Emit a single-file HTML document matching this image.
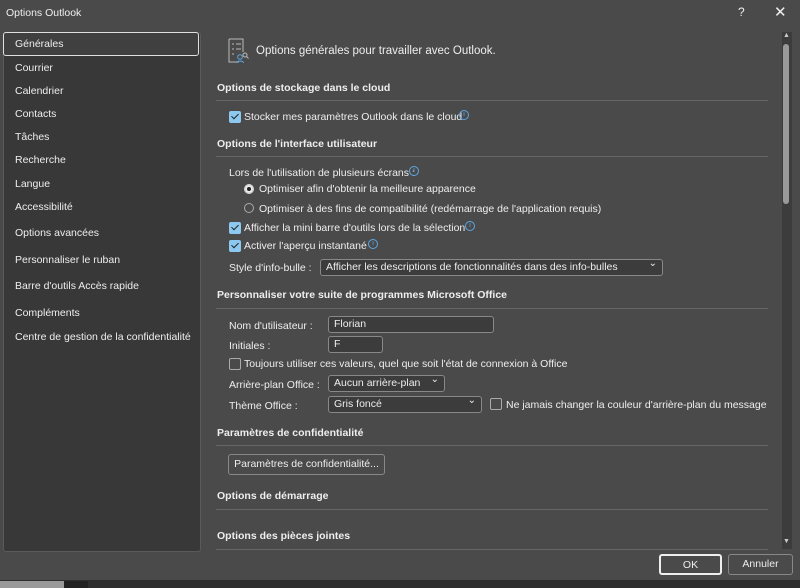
<!DOCTYPE html><html><head><style>
body{margin:0;width:800px;height:588px;background:#4a4a4a;font-family:"Liberation Sans",sans-serif;font-size:10.5px;color:#eee;position:relative;overflow:hidden}
.a{position:absolute;white-space:nowrap}
.side{position:absolute;left:3px;top:32px;width:196px;height:518px;background:#383838;border:1px solid #5a5a5a;border-radius:3px}
.sel{position:absolute;left:3px;top:32px;width:194px;height:22px;border:1.5px solid #e0e0e0;border-radius:3px;background:#404040}
.h{font-weight:bold;font-size:10.5px}
.ln{position:absolute;left:216px;width:552px;height:1px;background:#666}
.cb{position:absolute;width:10px;height:10px;border-radius:2px;border:1px solid #aaa}
.cb.on{background:#8cc8f0;border-color:#8cc8f0}
.cb.on::after{content:"";position:absolute;left:3px;top:0px;width:3px;height:6px;border:solid #222;border-width:0 1.5px 1.5px 0;transform:rotate(45deg)}
.i{position:absolute;width:8px;height:8px;border:1px solid #5aa7e6;border-radius:50%;color:#5aa7e6;font-size:7px;line-height:8px;text-align:center}
.box{position:absolute;border:1px solid #888;border-radius:3px;background:#3c3c3c;height:15px;line-height:15px;padding-left:5px;box-sizing:border-box;height:17px}
.dd::after{content:"⌄";position:absolute;right:5px;top:-4px;font-size:10px}
.btn{position:absolute;border:1px solid #888;border-radius:3px;text-align:center;box-sizing:border-box}
</style></head><body>
<div class="a" style="left:6px;top:7px">Options Outlook</div>
<div class="a" style="left:738px;top:5px;font-size:12px">?</div>
<div class="a" style="left:774px;top:3px;font-size:15px">✕</div>
<div class="side"></div><div class="sel"></div>
<div class="a" style="left:15px;top:38px">Générales</div>
<div class="a" style="left:15px;top:62px">Courrier</div>
<div class="a" style="left:15px;top:85px">Calendrier</div>
<div class="a" style="left:15px;top:108px">Contacts</div>
<div class="a" style="left:15px;top:131px">Tâches</div>
<div class="a" style="left:15px;top:154px">Recherche</div>
<div class="a" style="left:15px;top:178px">Langue</div>
<div class="a" style="left:15px;top:201px">Accessibilité</div>
<div class="a" style="left:15px;top:227px">Options avancées</div>
<div class="a" style="left:15px;top:254px">Personnaliser le ruban</div>
<div class="a" style="left:15px;top:280px">Barre d'outils Accès rapide</div>
<div class="a" style="left:15px;top:307px">Compléments</div>
<div class="a" style="left:15px;top:331px">Centre de gestion de la confidentialité</div>
<svg class="a" style="left:227px;top:38px" width="22" height="26" viewBox="0 0 22 26" fill="none" stroke="#bbb" stroke-width="1"><path d="M2 1h14v13M2 1v23h10"/><path d="M5 6h2M9 6h5M5 11h2M9 11h5M5 16h2"/><circle cx="13" cy="19" r="2.3" stroke="#5aa7e6"/><path d="M9.5 25c0-2.5 7-2.5 7 0" stroke="#5aa7e6"/><circle cx="18" cy="17" r="2"/><path d="M19.5 18.5l2 2"/></svg>
<div class="a" style="left:256px;top:45px;font-size:11.5px">Options générales pour travailler avec Outlook.</div>
<div class="a h" style="left:217px;top:82px">Options de stockage dans le cloud</div><div class="ln" style="top:100px"></div>
<div class="cb on" style="left:229px;top:111px"></div><div class="a" style="left:244px;top:111px">Stocker mes paramètres Outlook dans le cloud</div><div class="i" style="left:459px;top:110px">i</div>
<div class="a h" style="left:217px;top:138px">Options de l'interface utilisateur</div><div class="ln" style="top:156px"></div>
<div class="a" style="left:229px;top:167px">Lors de l'utilisation de plusieurs écrans :</div><div class="i" style="left:409px;top:166px">i</div>
<div class="a" style="left:244px;top:184px;width:8px;height:8px;border-radius:50%;border:1px solid #ddd;background:#222;box-shadow:inset 0 0 0 2px #eee"></div><div class="a" style="left:259px;top:183px">Optimiser afin d'obtenir la meilleure apparence</div>
<div class="a" style="left:244px;top:203px;width:8px;height:8px;border-radius:50%;border:1px solid #aaa"></div><div class="a" style="left:259px;top:203px">Optimiser à des fins de compatibilité (redémarrage de l'application requis)</div>
<div class="cb on" style="left:229px;top:222px"></div><div class="a" style="left:244px;top:222px">Afficher la mini barre d'outils lors de la sélection</div><div class="i" style="left:465px;top:221px">i</div>
<div class="cb on" style="left:229px;top:240px"></div><div class="a" style="left:244px;top:240px">Activer l'aperçu instantané</div><div class="i" style="left:368px;top:239px">i</div>
<div class="a" style="left:229px;top:262px">Style d'info-bulle :</div>
<div class="box dd" style="left:320px;top:259px;width:343px">Afficher les descriptions de fonctionnalités dans des info-bulles</div>
<div class="a h" style="left:217px;top:289px">Personnaliser votre suite de programmes Microsoft Office</div><div class="ln" style="top:308px"></div>
<div class="a" style="left:229px;top:320px">Nom d'utilisateur :</div><div class="box" style="left:328px;top:316px;width:166px">Florian</div>
<div class="a" style="left:229px;top:340px">Initiales :</div><div class="box" style="left:328px;top:336px;width:55px">F</div>
<div class="cb" style="left:229px;top:358px"></div><div class="a" style="left:244px;top:358px">Toujours utiliser ces valeurs, quel que soit l'état de connexion à Office</div>
<div class="a" style="left:229px;top:379px">Arrière-plan Office :</div><div class="box dd" style="left:328px;top:375px;width:117px">Aucun arrière-plan</div>
<div class="a" style="left:229px;top:400px">Thème Office :</div><div class="box dd" style="left:328px;top:396px;width:154px">Gris foncé</div>
<div class="cb" style="left:490px;top:398px"></div><div class="a" style="left:506px;top:399px">Ne jamais changer la couleur d'arrière-plan du message</div>
<div class="a h" style="left:217px;top:427px">Paramètres de confidentialité</div><div class="ln" style="top:445px"></div>
<div class="btn" style="left:228px;top:454px;width:157px;height:21px;line-height:19px">Paramètres de confidentialité...</div>
<div class="a h" style="left:217px;top:490px">Options de démarrage</div><div class="ln" style="top:509px"></div>
<div class="a h" style="left:217px;top:530px">Options des pièces jointes</div><div class="ln" style="top:549px"></div>
<div class="a" style="left:782px;top:32px;width:10px;height:517px;background:#3c3c3c"></div>
<div class="a" style="left:783px;top:44px;width:6px;height:160px;background:#9a9a9a;border-radius:3px"></div>
<div class="a" style="left:783px;top:538px;font-size:7px;color:#ccc">▼</div>
<div class="a" style="left:783px;top:32px;font-size:7px;color:#ccc">▲</div>
<div class="btn" style="left:659px;top:554px;width:63px;height:21px;line-height:19px;border:2px solid #eee">OK</div>
<div class="btn" style="left:728px;top:554px;width:65px;height:21px;line-height:19px">Annuler</div>
<div class="a" style="left:0;top:580px;width:800px;height:8px;background:#2e2e2e"></div>
<div class="a" style="left:0;top:581px;width:64px;height:7px;background:#9a9a9a"></div>
<div class="a" style="left:64px;top:581px;width:24px;height:7px;background:#222"></div>
</body></html>
